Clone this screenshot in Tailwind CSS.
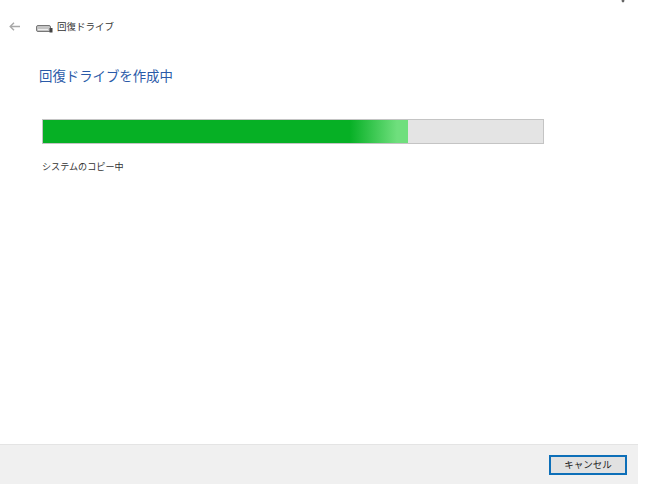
<!DOCTYPE html>
<html lang="ja">
<head>
<meta charset="utf-8">
<script src="https://cdn.jsdelivr.net/npm/@tailwindcss/browser@4"></script>
</head>
<body class="bg-white font-['Noto_Sans_CJK_JP',sans-serif] overflow-hidden">
<div class="relative flex flex-col w-[650px] h-[488px] bg-white">
  <svg class="absolute left-[618px] top-[-3px]" width="10" height="7" viewBox="0 0 10 7" fill="none" stroke="#666" stroke-width="1.2"><path d="M1 0L6 5M9 0L4 5"/></svg>
  <div class="flex items-center h-[16px] mt-[18px] pl-[9px]">
    <svg width="11" height="9" viewBox="0 0 11 9" fill="none" stroke="#a8a8a8" stroke-width="1.4"><path d="M5 0.8L1.2 4.5L5 8.2M1.2 4.5H11"/></svg>
    <svg class="ml-[16px] mt-[3px]" width="17" height="11" viewBox="0 0 17 11"><rect x="0.5" y="3.5" width="14" height="6" rx="1.5" fill="#c4c4c4" stroke="#777"/><rect x="13.5" y="6" width="3" height="4.5" fill="#444"/><path d="M2 7.5H12" stroke="#eee"/></svg>
    <span class="ml-[4px] text-[9.5px] leading-[16px] text-[#333]">回復ドライブ</span>
  </div>
  <h1 class="ml-[39px] mt-[31px] text-[13.4px] leading-[20px] font-normal text-[#2a5aa8]">回復ドライブを作成中</h1>
  <div class="ml-[42px] mt-[34px] w-[502px] h-[25px] border border-[#c4c4c4] bg-[#e4e4e4]">
    <div class="w-[365px] h-full bg-[linear-gradient(to_right,#06b025_0%,#06b025_84%,#6fdf7d_97%,#6fdf7d_100%)]"></div>
  </div>
  <p class="ml-[42px] mt-[14px] text-[9.1px] leading-[16px] text-[#333]">システムのコピー中</p>
  <div class="mt-[270px] flex justify-end items-center w-[638px] h-[40px] pr-[11px] bg-[#f0f0f0] border-t border-[#e4e4e4]">
    <button class="flex items-center justify-center w-[78px] h-[20px] border-2 border-[#0d6fb8] bg-[#e1e1e1] text-[9.5px] leading-none text-[#222]">キャンセル</button>
  </div>
</div>
</body>
</html>
